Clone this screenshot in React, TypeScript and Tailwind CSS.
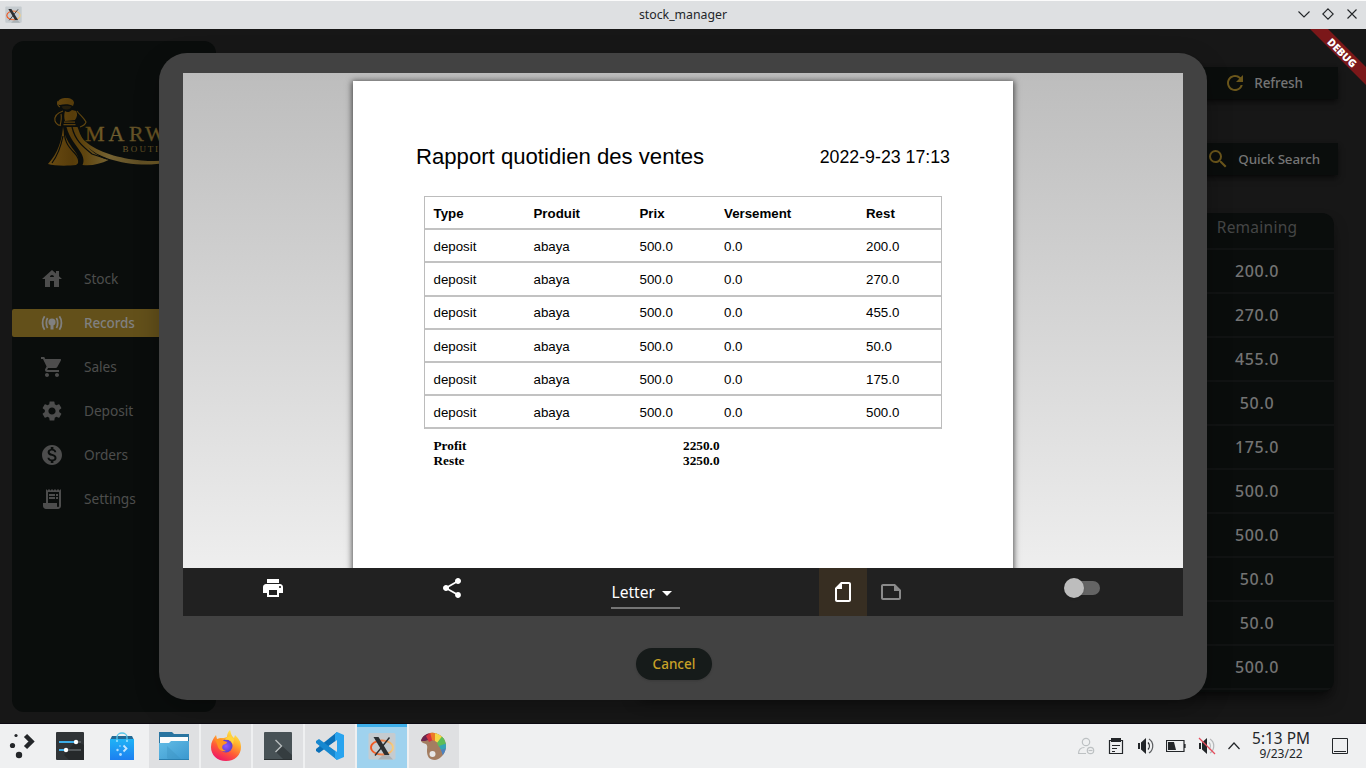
import React from "react";
import {
  MdHouse,
  MdShoppingCart,
  MdSettings,
  MdMonetizationOn,
  MdReceiptLong,
  MdRefresh,
  MdSearch,
  MdPrint,
  MdShare,
  MdOutlineNote,
  MdArrowDropDown,
} from "react-icons/md";

const remaining = ["200.0", "270.0", "455.0", "50.0", "175.0", "500.0", "500.0", "50.0", "50.0", "500.0"];
const rests = ["200.0", "270.0", "455.0", "50.0", "175.0", "500.0"];

function XIcon({ size }: { size: number }) {
  return (
    <svg width={size} height={size} viewBox="0 0 28 28">
      <defs>
        <linearGradient id="ring" x1="0" x2="1">
          <stop offset="0" stopColor="#f0521c" />
          <stop offset="0.6" stopColor="#ee8a55" />
          <stop offset="1" stopColor="#f5cf7e" />
        </linearGradient>
      </defs>
      <rect x="0.5" y="1" width="27" height="26.5" rx="1.5" fill="#c5cbcf" />
      <path d="M18 20 25 27.5H10Z" fill="#aab1b5" />
      <ellipse cx="14" cy="15.5" rx="11" ry="7" fill="none" stroke="url(#ring)" strokeWidth="1.8" />
      <path d="M21.500 5.500 7 23.500" stroke="#2b2e30" strokeWidth="1.400" />
      <path d="M5.500 5h5l11 18h-5z" fill="#2b2e30" />
    </svg>
  );
}

function PodcastIcon() {
  return (
    <svg width="22" height="20" viewBox="0 0 22 20" fill="none" stroke="currentColor" strokeWidth="1.800">
      <circle cx="11" cy="9" r="3.600" fill="currentColor" stroke="none" />
      <path d="M9.500 10h3v6.500h-3z" fill="currentColor" stroke="none" />
      <path d="M6.600 5C4.900 7.600 4.900 12.400 6.600 15M15.400 5c1.700 2.600 1.700 7.400 0 10M3.600 3.200C.9 6.800.9 13.200 3.600 16.800M18.400 3.200c2.700 3.600 2.700 10 0 13.600" />
    </svg>
  );
}

function Logo() {
  return (
    <svg width="160" height="76" viewBox="44 94 160 76">
      <defs>
        <linearGradient id="gold" x1="48" x2="170" y1="0" y2="0" gradientUnits="userSpaceOnUse">
          <stop offset="0" stopColor="#6a4b12" />
          <stop offset="0.2" stopColor="#573c0a" />
          <stop offset="0.3" stopColor="#5f450f" />
          <stop offset="0.5" stopColor="#756232" />
          <stop offset="0.75" stopColor="#5f4e24" />
          <stop offset="1" stopColor="#7a6328" />
        </linearGradient>
      </defs>
      <g fill="url(#gold)">
        <path d="M58 102c1-3 4-4 8-4 5 0 8 2 8 5l-1 3c-3-2-9-2-13-1-2 0-3-1-2-3z" />
        <path d="M61.500 106.500c3-1 7-1 10 0-1 2-2 3-5 3s-4-1-5-3z" opacity=".3" />
        <path d="M65 111c2 2 5 1 7-1l4 1c2 3 1 6-1 9l-10 1c-1-3-1-7 0-10z" />
        <path d="M64 121.500h11v1.200H64zM63.500 124h12v1.200h-12z" />
        <path d="M63 127c-1 13-5 26-15 37 6 2 20 2 28 1 4-2 3-7 0-12-5-7-11-14-13-26z" />
        <path d="M66.500 127c3 11 9 17 14 25 3 5 4 9 2 13 9 1 18-1 26-5-14-4-25-14-31-33z" />
        <path d="M79 134c9 14 29 21 50 25 19 3 40 3 55-2-16 8-38 9-58 6-22-4-41-12-47-29z" />
      </g>
      <g fill="none" stroke="url(#gold)" strokeWidth="1.100">
        <path d="M63 111c-6 2-9 5-8 10 1 3 4 5 6 4M61 114c1 4 0 8-1 12M77 111c3 4 7 7 9 11-1 3-3 4-6 5M58 101c-1 3 0 5 2 6" />
      </g>
      <path
        d="M64.500 128c-1 12 3 18 10 25 4 4 5 8 4 12M72 127c3 13 10 19 20 27l15 5M63 136c-2 10-5 19-11 27"
        fill="none"
        stroke="#0a0d0c"
        strokeWidth="1.200"
      />
      <g fill="url(#gold)" className="font-['Liberation_Serif',serif]">
        <text y="141" fontSize="22" stroke="url(#gold)" strokeWidth="0.300">
          <tspan x="85">M</tspan>
          <tspan x="108.500">A</tspan>
          <tspan x="129">R</tspan>
          <tspan x="145">W</tspan>
        </text>
        <text y="152" fontSize="9">
          <tspan x="122.500">B</tspan>
          <tspan x="130.700">O</tspan>
          <tspan x="139.500">U</tspan>
          <tspan x="147.800">T</tspan>
          <tspan x="155">I</tspan>
        </text>
      </g>
    </svg>
  );
}

function NavItem({ icon, label, active }: { icon: React.ReactNode; label: string; active?: boolean }) {
  return (
    <div
      className={
        active
          ? "flex h-7 items-center rounded-[2px] bg-[#63501a] pl-7 text-[#808080]"
          : "flex h-7 items-center pl-7 text-[#4d4d4d]"
      }
    >
      <span className="flex w-6 justify-center">{icon}</span>
      <span
        className={
          active
            ? "ml-5 text-[13.500px] leading-[26px] font-medium tracking-[-0.100px]"
            : "ml-5 text-[13.700px] leading-[26px] tracking-[-0.050px]"
        }
      >
        {label}
      </span>
    </div>
  );
}

function Sidebar() {
  return (
    <aside className="mt-3 ml-3 h-[671px] w-[204px] rounded-xl bg-[#0a0d0c] pt-[53px]">
      <div className="pl-8">
        <Logo />
      </div>
      <nav className="mt-[95px] flex flex-col gap-4">
        <NavItem icon={<MdHouse size={24} className="mb-px shrink-0" />} label="Stock" />
        <NavItem active icon={<PodcastIcon />} label="Records" />
        <NavItem icon={<MdShoppingCart size={24} className="shrink-0" />} label="Sales" />
        <NavItem icon={<MdSettings size={24} className="mb-px shrink-0" />} label="Deposit" />
        <NavItem icon={<MdMonetizationOn size={24} className="shrink-0" />} label="Orders" />
        <NavItem icon={<MdReceiptLong size={24} className="shrink-0" />} label="Settings" />
      </nav>
    </aside>
  );
}

function Records() {
  return (
    <main className="flex flex-1 flex-col items-end pt-[38px] pr-7">
      <button className="flex h-8 w-[180px] items-center justify-end bg-[#0a0d0c] pr-[35px] text-[#757575] shadow-md shadow-black/50">
        <MdRefresh size={24} className="mr-[7px] text-[#6b561b]" />
        <span className="text-[13.500px] leading-[28px] font-medium tracking-[-0.080px]">Refresh</span>
      </button>
      <button className="mt-11 flex h-8 w-[180px] items-center justify-end bg-[#0a0d0c] pr-[18px] text-[#757575] shadow-md shadow-black/50">
        <MdSearch size={24} className="mr-2 text-[#6b561b]" />
        <span className="text-[13.400px] leading-[28px] font-medium tracking-[-0.120px]">Quick Search</span>
      </button>
      <div className="mt-[38px] mr-1 flex h-[479px] w-[700px] flex-col items-end overflow-hidden rounded-xl bg-[#0a0d0c] shadow-lg shadow-black/50">
        <div className="flex h-[37px] w-full shrink-0 justify-end border-b-2 border-[#111313] text-[#454646]">
          <span className="w-[154px] text-center text-[15.500px] leading-[29px] tracking-[0.250px]">Remaining</span>
        </div>
        {remaining.map((v, i) => (
          <div key={i} className="flex h-11 w-full shrink-0 items-center justify-end border-b-2 border-[#111313] text-[#737373]">
            <span className="w-[154px] text-center text-[16px] font-medium tracking-[0.650px]">{v}</span>
          </div>
        ))}
      </div>
    </main>
  );
}

const cols = "grid grid-cols-[100px_106px_84.500px_142px_1fr] pl-[8.500px] items-center";

function Report() {
  return (
    <div className="h-[600px] w-[660px] bg-white pt-[62px] font-['Liberation_Sans',Arial,sans-serif] text-black shadow-[0_1px_6px_1px_rgba(0,0,0,0.65)]">
      <div className="flex items-start justify-between pr-[63px] pl-[63px]">
        <h1 className="text-[22.150px] leading-[27px]">Rapport quotidien des ventes</h1>
        <span className="text-[17.750px] leading-[28px]">2022-9-23 17:13</span>
      </div>
      <div className="mt-[24.500px] ml-[71px] w-[518px] border border-b-0 border-[#bcbcbc] text-[13.300px]">
        <div className={`${cols} h-[33.700px] border-b-2 border-[#c2c2c2] pt-[3px] font-bold`}>
          <span>Type</span>
          <span>Produit</span>
          <span>Prix</span>
          <span>Versement</span>
          <span>Rest</span>
        </div>
        {rests.map((r, i) => (
          <div key={i} className={`${cols} h-[33.200px] border-b-2 border-[#c2c2c2] pt-[2.500px]`}>
            <span>deposit</span>
            <span>abaya</span>
            <span>500.0</span>
            <span>0.0</span>
            <span>{r}</span>
          </div>
        ))}
      </div>
      <div className="mt-[8.500px] ml-[80.500px] grid w-[400px] grid-cols-[249.500px_1fr] font-['Liberation_Serif',serif] text-[13.300px] leading-[15.500px] font-bold">
        <span>Profit</span>
        <span>2250.0</span>
        <span>Reste</span>
        <span>3250.0</span>
      </div>
    </div>
  );
}

function PrintDialog() {
  return (
    <div className="absolute top-[24px] left-[159px] flex h-[647px] w-[1048px] flex-col items-center rounded-[28px] bg-[#424242] pt-5 shadow-[0_8px_24px_rgba(0,0,0,0.25)]">
      <div className="flex h-[495px] w-[1000px] justify-center overflow-hidden bg-linear-to-b from-[#bdbdbd] to-[#eeeeee] pt-2">
        <Report />
      </div>
      <div className="grid h-12 w-[1000px] grid-cols-[179px_180px_206px_238px_192px] justify-items-center bg-[#212121] text-white">
        <MdPrint size={24} className="mt-2" />
        <MdShare size={24} className="mt-2" />
        <div className="mt-[9px] flex h-8 w-[69px] items-center border-b-2 border-[#757575] pl-px text-[15.600px]">
          <span className="pt-0.5">Letter</span>
          <MdArrowDropDown size={24} className="mt-px shrink-0" />
        </div>
        <div className="flex h-12">
          <span className="flex w-12 items-center justify-center bg-[#372e22]">
            <MdOutlineNote size={24} className="-rotate-90" />
          </span>
          <span className="flex w-12 items-center justify-center text-[#8a8a8a]">
            <MdOutlineNote size={24} />
          </span>
        </div>
        <div className="mt-[10px] flex h-5 w-9 items-center">
          <span className="z-10 h-5 w-5 shrink-0 rounded-full bg-[#bdbdbd] shadow-sm" />
          <span className="-ml-[18px] h-[14px] w-[34px] shrink-0 rounded-full bg-[#646464]" />
        </div>
      </div>
      <button className="mt-8 mr-[18px] flex h-8 w-[76px] items-center justify-center rounded-full bg-[#161b1a] text-[13.500px] leading-[28px] font-medium text-[#c9a227] shadow-sm">
        Cancel
      </button>
    </div>
  );
}

function DebugBanner() {
  return (
    <svg className="absolute top-0 right-0" width="60" height="60" viewBox="0 0 60 60">
      <path d="M4 0h18l38 38v18z" fill="#7b1719" />
      <text
        transform="translate(36.200 23.700) rotate(45)"
        textAnchor="middle"
        dominantBaseline="central"
        fontSize="10.500"
        fontWeight="900"
        fill="#fff"
      >
        DEBUG
      </text>
    </svg>
  );
}

function SettingsApp() {
  return (
    <svg width="28" height="28">
      <rect width="28" height="28" rx="1" fill="#303437" />
      <path d="M8 23 13 28H28V13L20 9Z" fill="#26292b" />
      <path d="M3 10h22M3 18h22" stroke="#53585b" strokeWidth="2" />
      <path d="M3 10h17M3 18h7" stroke="#3daee9" strokeWidth="2" />
      <circle cx="20" cy="10" r="2.200" fill="#fff" />
      <circle cx="10" cy="18" r="2.200" fill="#fff" />
    </svg>
  );
}

function Discover() {
  return (
    <svg width="28" height="28">
      <defs>
        <linearGradient id="bag" x2="0" y2="1">
          <stop offset="0" stopColor="#1fb3f6" />
          <stop offset="1" stopColor="#1d7ff0" />
        </linearGradient>
      </defs>
      <path d="M4 4h20l2 4H2z" fill="#246a94" />
      <path d="M2 7h24v21H2z" fill="url(#bag)" />
      <path d="M9 9V5a5 4 0 0 1 10 0v4" fill="none" stroke="#58c5e8" strokeWidth="1.300" />
      <circle cx="9" cy="9" r="1" fill="#9be2ff" />
      <circle cx="19" cy="9" r="1" fill="#9be2ff" />
      <path d="m15.500 13.500 3 3-3 3" fill="none" stroke="#c5e6ff" strokeWidth="1.800" />
      <g fill="#b3ddff">
        <circle cx="12" cy="14" r=".8" />
        <circle cx="9.500" cy="18" r="1.200" />
        <circle cx="12.500" cy="22.500" r="1.400" />
      </g>
    </svg>
  );
}

function Folder() {
  return (
    <svg width="30" height="28">
      <defs>
        <linearGradient id="fold" x2="1" y2="1">
          <stop offset="0" stopColor="#62bce6" />
          <stop offset="1" stopColor="#3b97ce" />
        </linearGradient>
      </defs>
      <path d="M0 0h13l2 2h15v14H0z" fill="#2974a0" />
      <path d="M1 5h28v8H1z" fill="#fcfcfc" />
      <path d="M0 11h10l2-2h18v19H0z" fill="url(#fold)" />
      <path d="m8 14 14 13H9l-1-1z" fill="#398fbe" opacity=".35" />
      <path d="M0 27h30v1H0z" fill="#2a7fb0" />
    </svg>
  );
}

function Firefox() {
  return (
    <svg width="32" height="32" viewBox="0 0 32 32">
      <defs>
        <linearGradient id="fox" x1="0.800" y1="0" x2="0.300" y2="1">
          <stop offset="0" stopColor="#fff44f" />
          <stop offset="0.350" stopColor="#ffb02e" />
          <stop offset="0.650" stopColor="#ff5b36" />
          <stop offset="1" stopColor="#ee1468" />
        </linearGradient>
        <radialGradient id="globe">
          <stop offset="0" stopColor="#9059ff" />
          <stop offset="1" stopColor="#5b3dcc" />
        </radialGradient>
      </defs>
      <path d="M20 0c1 3 1 5 4 8l1-3c3 3 6 6 6 12 0 8-6 14-15 14C7 31 1 25 1 17c0-5 2-8 5-12l1 4 3-1c3 0 5 0 7-1 0-3 1-5 3-7z" fill="url(#fox)" />
      <circle cx="16" cy="16" r="6.500" fill="url(#globe)" />
      <path d="M5 10c4-2 7-1 9 1l3 1c0 2-3 2-4 3-2 3 0 5 3 6-4 1-7-1-8-4-1-2-1-5-3-7z" fill="#ff9420" />
      <path d="M15 10c3-1 7 0 8 5l1-6-3-3c-3 0-5 2-6 4z" fill="#ffd43b" />
    </svg>
  );
}

function Konsole() {
  return (
    <svg width="28" height="28">
      <rect width="28" height="28" rx="1" fill="#485256" />
      <path d="m12 20 6-6 10 9v5H20z" fill="#353d40" />
      <path d="m11.500 8 6 6-6 6" fill="none" stroke="#b7bcbe" strokeWidth="1.400" />
      <path d="M0 27h28v1H0z" fill="#2b3133" />
    </svg>
  );
}

function Code() {
  return (
    <svg width="28" height="28">
      <path d="M21 0v8L3 21l-3-2v-2z" fill="#0b70b8" />
      <path d="M21 28v-8L3 7 0 9v2z" fill="#1788d0" />
      <path d="m21 0 7 3v22l-7 3-2-2V2z" fill="#29a4ef" />
      <path d="M21 8v12l-8-6z" fill="#dfe0e2" />
    </svg>
  );
}

function Palette() {
  return (
    <svg width="26" height="28" viewBox="0 0 26 28">
      <defs>
        <clipPath id="board">
          <path d="M0 9C1 4 7 0 13 1c7 1 12 6 12 13s-5 13-11 14c-6 0-8-4-8-9 0-3 1-5-1-7-2-1-4-1-5-3z" />
        </clipPath>
      </defs>
      <g clipPath="url(#board)">
        <path d="M0 0h26v28H0z" fill="#a37d61" />
        <path d="M0 0h7l3 7-6 2H0z" fill="#6b254f" />
        <path d="m5 4 5-4 2 8-4 2z" fill="#d83440" />
        <path d="M9 0h7l-2 9-3-1z" fill="#ed7a28" />
        <path d="M14 0c4 0 7 1 9 4l-6 7-3-2z" fill="#f3d747" />
        <path d="m22 3 5 8-9 4-2-4z" fill="#5dbd58" />
        <path d="M26 11v6l-6 1-2-4z" fill="#35a4b5" />
        <path d="M26 16c-1 4-2 5-4 8l-2-6z" fill="#4b82c0" />
      </g>
      <circle cx="11.500" cy="22" r="3" fill="#e7e7e7" />
    </svg>
  );
}

function TaskButton({ children, active }: { children: React.ReactNode; active?: boolean }) {
  return (
    <div
      className={
        active
          ? "flex h-11 w-[50px] items-center justify-center border-t-[3px] border-[#3daee9] bg-[#9fd2ee] pb-[3px]"
          : "flex h-11 w-[50px] items-center justify-center bg-[#dfe0e2]"
      }
    >
      {children}
    </div>
  );
}

function Speaker({ muted }: { muted?: boolean }) {
  return (
    <svg width="18" height="18" fill="none">
      <path d="M1 6h2v6H1z" fill="#232629" />
      <path d="M4 5.500 9 1v16l-5-4.500z" fill="#232629" />
      <path d="M11 5.500c1.800 2 1.800 5 0 7" stroke={muted ? "#b5b8ba" : "#232629"} strokeWidth="1.200" />
      <path d="M12 2c5 3 5 11 0 14" stroke={muted ? "#b5b8ba" : "#5b5e61"} strokeWidth="1.200" />
      {muted && <path d="m1 1 16 16" stroke="#e64c5c" strokeWidth="1.200" />}
    </svg>
  );
}

function Taskbar() {
  return (
    <footer className="flex h-11 w-full items-center bg-[#eff0f1] text-[#232629]">
      <svg className="ml-[9px]" width="26" height="28" fill="#232629">
        <circle cx="7" cy="3.500" r="1.600" />
        <circle cx="3.500" cy="13.500" r="2.600" />
        <circle cx="10" cy="23" r="3.200" />
        <path d="m16.500 3.500 6 6-6 6" fill="none" stroke="#232629" strokeWidth="4.500" />
      </svg>
      <div className="ml-[21px]"><SettingsApp /></div>
      <div className="ml-6"><Discover /></div>
      <div className="ml-[13px] flex gap-0.5">
        <TaskButton><Folder /></TaskButton>
        <TaskButton><Firefox /></TaskButton>
        <TaskButton><Konsole /></TaskButton>
        <TaskButton><Code /></TaskButton>
        <TaskButton active><XIcon size={28} /></TaskButton>
        <TaskButton><Palette /></TaskButton>
      </div>
      <div className="ml-auto flex items-center pr-[18px]">
        <svg width="18" height="18" fill="none" stroke="#bdc1c3" strokeWidth="1.200">
          <circle cx="9" cy="5" r="3.700" />
          <path d="M1.500 17c0-4 2-6.500 6-6.500M1.500 16.500H9" />
          <circle cx="13.500" cy="13.500" r="3.200" />
          <path d="M11.500 13.500h4" />
        </svg>
        <svg className="ml-[13px]" width="16" height="18" fill="none" stroke="#232629">
          <path d="M1.500 3.500h13v13h-13z" strokeWidth="1.200" />
          <path d="M3 1h10v4H3z" fill="#232629" stroke="none" />
          <path d="M4 8.500h8M4 11.500h5M4 14.500h3" />
        </svg>
        <span className="ml-[13px]"><Speaker /></span>
        <svg className="ml-[11px]" width="20" height="14" fill="none" stroke="#232629">
          <path d="M.5 1.500h17.500v11H.5zM19 5v4" strokeWidth="1.200" />
          <path d="M2 3h6l2 8H2z" fill="#232629" stroke="none" />
        </svg>
        <span className="ml-3"><Speaker muted /></span>
        <svg className="ml-[12px]" width="12" height="8" fill="none" stroke="#232629">
          <path d="m.5 7 5.500-6 5.500 6" strokeWidth="1.200" />
        </svg>
        <div className="ml-[9px] flex w-[64px] flex-col items-center whitespace-nowrap">
          <span className="text-[15.400px] leading-[16px]">5:13 PM</span>
          <span className="text-[12px] leading-[14px]">9/23/22</span>
        </div>
        <svg className="ml-[19px]" width="16" height="16" fill="none" stroke="#232629">
          <path d="M.5.5h15v15H.5zM2 13.500h12" />
        </svg>
      </div>
    </footer>
  );
}

export default function App() {
  return (
    <div className="flex h-[768px] w-[1366px] flex-col overflow-hidden bg-[#171717] font-['Noto_Sans',sans-serif]">
      <header className="grid h-[29px] shrink-0 grid-cols-[1fr_auto_1fr] items-center border-t border-[#fbfbfb] bg-[#dee0e2] text-[#232629]">
        <div className="-mt-0.5 pl-[5px]"><XIcon size={17} /></div>
        <span className="text-[12.300px] leading-[28px]">stock_manager</span>
        <svg className="-mt-0.5 justify-self-end" width="70" height="16" fill="none" stroke="#232629" strokeWidth="1.100">
          <path d="m2.500 5.500 5.500 5.500 5.500-5.500M32 2.800l5.200 5.200-5.200 5.200L26.800 8zM51.500 3.500l9 9M60.500 3.500l-9 9" />
        </svg>
      </header>
      <div className="relative flex h-[695px] shrink-0 overflow-hidden border-b border-[#0b0911]">
        <Sidebar />
        <Records />
        <PrintDialog />
        <DebugBanner />
      </div>
      <Taskbar />
    </div>
  );
}
